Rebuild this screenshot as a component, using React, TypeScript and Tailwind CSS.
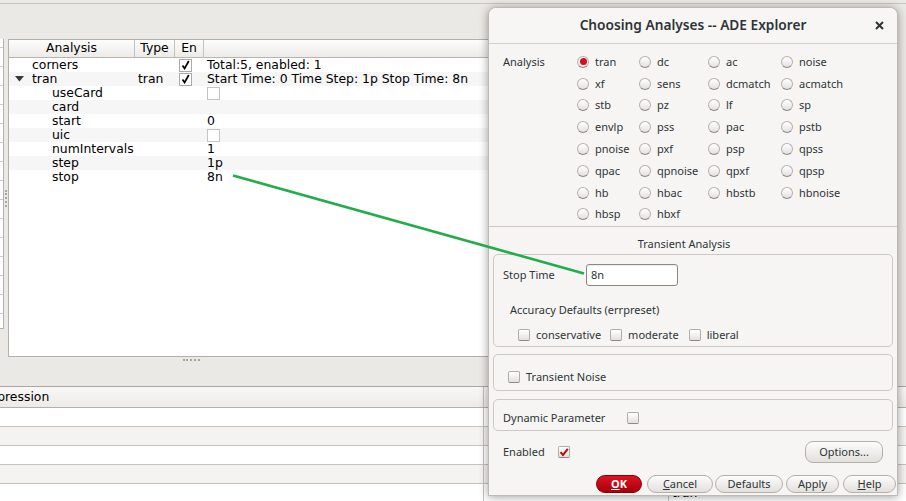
import React from "react";

const Radio = ({ label, checked }: { label: string; checked?: boolean }) => (
  <div className="flex items-center gap-[6px]">
    <span className="flex h-[12px] w-[12px] shrink-0 items-center justify-center rounded-full border border-[#b7b1ab] border-b-[#8f8984] bg-linear-to-b from-white to-[#e3e1de]">
      {checked && <span className="h-[7px] w-[7px] rounded-full bg-[#d0101e]" />}
    </span>
    <span className="leading-[14px]">{label}</span>
  </div>
);

const Check = ({ checked }: { checked?: boolean }) => (
  <span className="flex h-[12px] w-[12px] shrink-0 items-center justify-center rounded-[2px] border border-[#b2aca6] border-b-[#8e8882] bg-linear-to-b from-white to-[#e3e1de]">
    {checked && (
      <svg width="10" height="10" viewBox="0 0 10 10">
        <path d="M1.5 5.2 L4 8 L8.8 1.8" fill="none" stroke="#c8000e" strokeWidth="2" />
      </svg>
    )}
  </span>
);

const TreeCheck = ({ checked }: { checked?: boolean }) => (
  <span
    className={
      "flex h-[13px] w-[13px] items-center justify-center border bg-white " +
      (checked ? "border-[#a9a9a9]" : "border-[#c4c4c4]")
    }
  >
    {checked && (
      <svg width="9" height="10" viewBox="0 0 9 10">
        <path d="M1.5 5.5 L3.6 8.5 L7.8 1" fill="none" stroke="#000" strokeWidth="1.7" />
      </svg>
    )}
  </span>
);

const Btn = ({
  children,
  w,
  className,
}: {
  children: React.ReactNode;
  w: string;
  className?: string;
}) => (
  <div
    className={
      "flex h-[18px] items-center justify-center rounded-[9px] border border-[#b5afa9] bg-linear-to-b from-[#fcfcfb] to-[#e2e0dd] text-[11px] text-[#2e3436] " +
      w +
      " " +
      (className ?? "")
    }
  >
    {children}
  </div>
);

type TreeRow = {
  name: string;
  level: number;
  type?: string;
  en?: boolean;
  value?: string;
  valueCheck?: boolean;
  expand?: boolean;
};

const treeRows: TreeRow[] = [
  { name: "corners", level: 0, en: true, value: "Total:5, enabled: 1" },
  { name: "tran", level: 0, type: "tran", en: true, expand: true, value: "Start Time: 0 Time Step: 1p Stop Time: 8n" },
  { name: "useCard", level: 1, valueCheck: true },
  { name: "card", level: 1 },
  { name: "start", level: 1, value: "0" },
  { name: "uic", level: 1, valueCheck: true },
  { name: "numIntervals", level: 1, value: "1" },
  { name: "step", level: 1, value: "1p" },
  { name: "stop", level: 1, value: "8n" },
];

const radios: { l: string; c?: boolean }[][] = [
  [{ l: "tran", c: true }, { l: "dc" }, { l: "ac" }, { l: "noise" }],
  [{ l: "xf" }, { l: "sens" }, { l: "dcmatch" }, { l: "acmatch" }],
  [{ l: "stb" }, { l: "pz" }, { l: "lf" }, { l: "sp" }],
  [{ l: "envlp" }, { l: "pss" }, { l: "pac" }, { l: "pstb" }],
  [{ l: "pnoise" }, { l: "pxf" }, { l: "psp" }, { l: "qpss" }],
  [{ l: "qpac" }, { l: "qpnoise" }, { l: "qpxf" }, { l: "qpsp" }],
  [{ l: "hb" }, { l: "hbac" }, { l: "hbstb" }, { l: "hbnoise" }],
  [{ l: "hbsp" }, { l: "hbxf" }],
];

export default function App() {
  return (
    <div className="relative h-[501px] w-[906px] overflow-hidden bg-[#ebe9e5] font-['DejaVu_Sans',sans-serif] text-[12.4px] text-black">
      {/* background window */}
      <div className="flex h-full flex-col">
        <div className="h-[4px] shrink-0 border-b border-[#c9c5c0]" />
        <div className="h-[35px] shrink-0" />
        <div className="flex h-[318px] shrink-0">
          {/* narrow left panel */}
          <div className="flex h-[290px] w-[4px] flex-col border-r border-b border-[#b5b1ac] bg-white">
            <div className="h-[9px] shrink-0 border-b border-[#cfcbc6]" />
            {Array.from({ length: 14 }).map((_, i) => (
              <div key={i} className="h-[19px] shrink-0 border-b border-[#cfcbc6]" />
            ))}
          </div>
          <div className="flex w-[4px] flex-col items-center pt-[151px]">
            <div className="h-[17px] w-[2px] border-l-2 border-dotted border-[#a9a49e]" />
          </div>
          {/* tree table */}
          <div className="flex w-[887px] flex-col border border-[#b3afaa] bg-white">
            <div className="flex h-[18px] shrink-0 border-b border-[#b8b4af] bg-linear-to-b from-[#fdfdfc] to-[#ecebe8]">
              <div className="flex w-[126px] items-center justify-center border-r border-[#c4c0bb]">Analysis</div>
              <div className="flex w-[40px] items-center justify-center border-r border-[#c4c0bb]">Type</div>
              <div className="flex w-[29px] items-center justify-center border-r border-[#c4c0bb]">En</div>
              <div className="flex-1" />
            </div>
            {treeRows.map((r, i) => (
              <div
                key={r.name}
                className={"flex h-[14px] shrink-0 items-center leading-[14px] " + (i % 2 === 1 ? "bg-[#f6f6f6]" : "bg-white")}
              >
                <div className={"flex w-[126px] items-center " + (r.level === 0 ? "pl-[6px]" : "pl-[43px]")}>
                  {r.level === 0 && (
                    <span className="flex w-[17px] items-center">
                      {r.expand && (
                        <svg width="9" height="6" viewBox="0 0 9 6">
                          <path d="M0 0 L9 0 L4.5 5.5 Z" fill="#3a3a3a" />
                        </svg>
                      )}
                    </span>
                  )}
                  <span>{r.name}</span>
                </div>
                <div className="w-[40px] pl-[3px]">{r.type ?? ""}</div>
                <div className="flex w-[29px] items-center pl-[4px]">{r.en !== undefined && <TreeCheck checked={r.en} />}</div>
                <div className="flex flex-1 items-center pl-[3px] whitespace-nowrap">
                  {r.valueCheck ? <TreeCheck /> : r.value ?? ""}
                </div>
              </div>
            ))}
          </div>
        </div>
        {/* horizontal splitter */}
        <div className="h-[29px] shrink-0 pt-[2px] pl-[183px]">
          <div className="h-[2px] w-[17px] border-t-2 border-dotted border-[#a9a49e]" />
        </div>
        {/* bottom table */}
        <div className="flex-1 border-t border-[#aaa6a1] bg-white">
          <div className="flex h-[21px] border-b border-[#b3afaa] bg-linear-to-b from-[#f9f8f6] to-[#ecebe8]">
            <div className="flex w-[484px] items-center overflow-hidden border-r border-[#c4c0bb]">
              <span className="ml-[-18px] whitespace-nowrap">Expression</span>
            </div>
            <div className="w-[185px] border-r border-[#c4c0bb]" />
            <div className="flex-1" />
          </div>
          {[0, 1, 2, 3, 4].map((i) => (
            <div key={i} className={"flex h-[19px] border-b border-[#c6c2bd] " + (i % 2 === 1 ? "bg-[#f4f3f1]" : "bg-white")}>
              <div className="w-[484px] border-r border-[#c6c2bd]" />
              <div className="w-[185px] border-r border-[#c6c2bd]" />
              <div className="flex flex-1 items-center pl-[3px]">{i === 4 ? "tran" : ""}</div>
            </div>
          ))}
        </div>
      </div>

      {/* dialog window */}
      <div className="absolute left-[488px] top-[7px] flex h-[489px] w-[410px] flex-col overflow-hidden rounded-t-[8px] border border-[#bfb9b3] bg-[#f6f5f4] font-['Noto_Sans',sans-serif] text-[11px] text-[#2e3436] shadow-[0_1px_10px_rgba(0,0,0,0.38)]">
        <div className="relative flex h-[36px] shrink-0 items-center justify-center border-b border-[#d3cfca] bg-[#f7f6f5]">
          <span className="text-[13.7px] font-semibold text-[#2e3436]">Choosing Analyses -- ADE Explorer</span>
          <svg className="absolute right-[13px] top-[13px]" width="9" height="9" viewBox="0 0 9 9">
            <path d="M1 1 L8 8 M8 1 L1 8" stroke="#2e3436" strokeWidth="2" />
          </svg>
        </div>

        {/* analysis radio grid */}
        <div className="flex h-[182px] shrink-0 pt-[7px] pl-[14px]">
          <div className="flex h-[21.8px] w-[74px] items-center">Analysis</div>
          <div className="grid grid-cols-[62px_69px_73px_auto] auto-rows-[21.8px]">
            {radios.flatMap((row, ri) =>
              row.map((r) => (
                <div key={ri + r.l} className="flex items-center">
                  <Radio label={r.l} checked={r.c} />
                </div>
              ))
            )}
          </div>
        </div>
        <div className="h-px shrink-0 bg-[#cdc8c3]" />

        <div className="h-[27px] shrink-0 pt-[10px] pr-[18px] text-center leading-[14px]">Transient Analysis</div>

        {/* stop time group */}
        <div className="mx-[4px] h-[93px] shrink-0 rounded-[5px] border border-[#cdc8c3]">
          <div className="mt-[9px] flex items-center pl-[9px]">
            <span className="w-[83px]">Stop Time</span>
            <div className="flex h-[22px] w-[92px] items-center rounded-[3px] border border-[#8d8782] bg-white pl-[4px] shadow-[inset_0_1px_1px_rgba(0,0,0,0.08)]">
              8n
            </div>
          </div>
          <div className="mt-[17px] pl-[16px] leading-[14px]">Accuracy Defaults (errpreset)</div>
          <div className="mt-[11px] flex h-[14px] items-center pl-[24px]">
            <Check />
            <span className="ml-[6px]">conservative</span>
            <span className="ml-[9px]" />
            <Check />
            <span className="ml-[6px]">moderate</span>
            <span className="ml-[10px]" />
            <Check />
            <span className="ml-[6px]">liberal</span>
          </div>
        </div>

        {/* transient noise group */}
        <div className="mx-[4px] mt-[7px] h-[37px] shrink-0 rounded-[5px] border border-[#cdc8c3] pt-[15px] pl-[14px]">
          <div className="flex h-[14px] items-center">
            <Check />
            <span className="ml-[6px]">Transient Noise</span>
          </div>
        </div>

        {/* dynamic parameter group */}
        <div className="mx-[4px] mt-[8px] h-[32px] shrink-0 rounded-[5px] border border-[#cdc8c3] pt-[11px] pl-[9px]">
          <div className="flex h-[14px] items-center">
            <span className="w-[124px]">Dynamic Parameter</span>
            <Check />
          </div>
        </div>

        {/* enabled + options */}
        <div className="mt-[10px] flex h-[22px] shrink-0 items-center pl-[14px] pr-[14px]">
          <span className="w-[55px]">Enabled</span>
          <Check checked />
          <div className="flex-1" />
          <div className="flex h-[22px] w-[78px] items-center justify-center rounded-[8px] border border-[#b5afa9] bg-linear-to-b from-[#fcfcfb] to-[#e2e0dd]">
            Options...
          </div>
        </div>

        {/* bottom buttons */}
        <div className="mt-[12px] flex h-[18px] shrink-0 items-center justify-end pr-[1px]">
          <div className="flex h-[18px] w-[46px] items-center justify-center rounded-[9px] border border-[#8a0009] bg-linear-to-b from-[#dc1420] to-[#a9000b] text-[11px] font-bold text-white">
            <span className="underline underline-offset-1">O</span>K
          </div>
          <Btn w="w-[66px]" className="ml-[5px]">
            <span className="underline underline-offset-1">C</span>ancel
          </Btn>
          <Btn w="w-[68px]" className="ml-[2px]">
            Defaults
          </Btn>
          <Btn w="w-[53px]" className="ml-[3px]">
            Apply
          </Btn>
          <Btn w="w-[53px]" className="ml-[4px]">
            <span className="underline underline-offset-1">H</span>elp
          </Btn>
        </div>
      </div>

      {/* green annotation line */}
      <svg className="pointer-events-none absolute left-0 top-0" width="906" height="501" viewBox="0 0 906 501">
        <line x1="233" y1="175.5" x2="584" y2="273.5" stroke="#22ad4a" strokeWidth="2.6" />
      </svg>
    </div>
  );
}
